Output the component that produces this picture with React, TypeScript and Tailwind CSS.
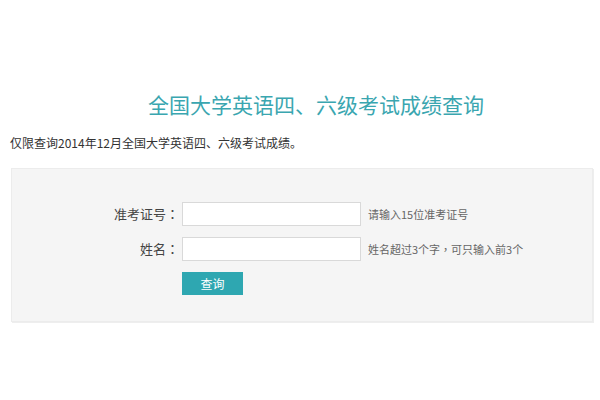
const centered = { fontFamily: '"Noto Sans CJK TC", "Noto Sans CJK SC", sans-serif' };

export default function App() {
  return (
    <div
      className="h-[400px] w-[600px] overflow-hidden bg-white text-[#333]"
      style={{ fontFamily: '"Microsoft YaHei", "Noto Sans CJK SC", "Noto Sans", sans-serif' }}
    >
      {/* Title */}
      <h1 className="pl-[32px] pt-[90px] text-center text-[21px] leading-[28px] font-normal text-[#3aa6b0]">
        全国大学英语四、六级考试成绩查询
      </h1>

      <p className="mt-[17px] pl-[10px] text-[12px] leading-[16px] text-[#333]">
        仅限查询2014年12月全国大学英语四、六级考试成绩。
      </p>

      {/* Form panel */}
      <div className="ml-[11px] mt-[17px] h-[154px] w-[582px] border border-[#ececec] bg-[#f5f5f5] shadow-[1px_1px_0_#eeeeee]">
        <div className="flex flex-col gap-[11px] pt-[33px]">
          <div className="flex items-center">
            <label className="w-[170px] pr-[3px] text-right text-[13px] text-[#444]">
              准考证号<span style={centered}>：</span>
            </label>
            <input
              type="text"
              className="h-[24px] w-[179px] border border-[#d9d9d9] bg-white outline-none"
            />
            <span className="ml-[7px] text-[11px] text-[#666]">请输入15位准考证号</span>
          </div>
          <div className="flex items-center">
            <label className="w-[170px] pr-[3px] text-right text-[13px] text-[#444]">
              姓名<span style={centered}>：</span>
            </label>
            <input
              type="text"
              className="h-[24px] w-[179px] border border-[#d9d9d9] bg-white outline-none"
            />
            <span className="ml-[7px] text-[11px] text-[#666]">
              姓名超过3个字<span style={centered}>，</span>可只输入前3个
            </span>
          </div>
          <div className="flex">
            <button
              type="button"
              className="ml-[170px] h-[23px] w-[61px] bg-[#2ea7b1] text-[12px] leading-[23px] text-white"
            >
              查询
            </button>
          </div>
        </div>
      </div>
    </div>
  );
}
